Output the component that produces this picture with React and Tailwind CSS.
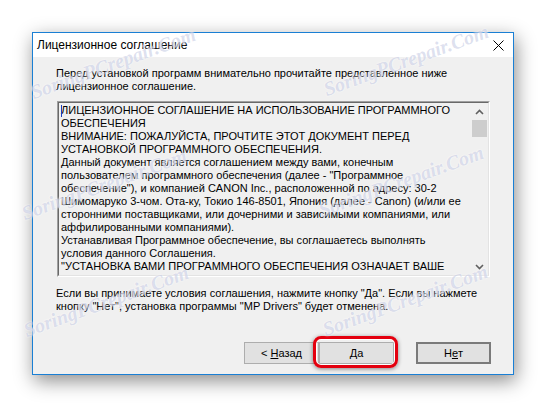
import React from "react";

const boxLines = [
  "ЛИЦЕНЗИОННОЕ СОГЛАШЕНИЕ НА ИСПОЛЬЗОВАНИЕ ПРОГРАММНОГО",
  "ОБЕСПЕЧЕНИЯ",
  "ВНИМАНИЕ: ПОЖАЛУЙСТА, ПРОЧТИТЕ ЭТОТ ДОКУМЕНТ ПЕРЕД",
  "УСТАНОВКОЙ ПРОГРАММНОГО ОБЕСПЕЧЕНИЯ.",
  "Данный документ является соглашением между вами, конечным",
  "пользователем программного обеспечения (далее - \"Программное",
  "обеспечение\"), и компанией CANON Inc., расположенной по адресу: 30-2",
  "Шимомаруко 3-чом. Ота-ку, Токио 146-8501, Япония (далее - Canon) (и/или ее",
  "сторонними поставщиками, или дочерними и зависимыми компаниями, или",
  "аффилированными компаниями).",
  "Устанавливая Программное обеспечение, вы соглашаетесь выполнять",
  "условия данного Соглашения.",
  "\"УСТАНОВКА ВАМИ ПРОГРАММНОГО ОБЕСПЕЧЕНИЯ ОЗНАЧАЕТ ВАШЕ",
];

const marks = [
  { left: 113, top: 63 },
  { left: 406, top: 60 },
  { left: 104, top: 184 },
  { left: 401, top: 181 },
  { left: 106, top: 301 },
  { left: 405, top: 300 },
];

function Watermark({ left, top }) {
  return (
    <div
      className="absolute pointer-events-none whitespace-nowrap italic font-bold text-[20px] leading-none text-[rgba(150,160,205,0.32)] [font-family:'Liberation_Serif',serif] -translate-x-1/2 -translate-y-1/2 -rotate-[20deg] [text-shadow:0_0_2px_rgba(255,255,255,0.9)]"
      style={{ left, top }}
    >
      SoringPCrepair.Com
    </div>
  );
}

function Chevron({ up }) {
  return (
    <svg width="9" height="6" viewBox="0 0 9 6">
      <path
        d={up ? "M1 5 L4.5 1.5 L8 5" : "M1 1 L4.5 4.5 L8 1"}
        fill="none"
        stroke="#606060"
        strokeWidth="1.6"
      />
    </svg>
  );
}

export default function App() {
  return (
    <div className="relative w-[546px] h-[408px] bg-white overflow-hidden pt-[32px] pl-[32px] [font-family:'Liberation_Sans',Arial,sans-serif] text-black">
      <div className="w-[482px] h-[343px] border border-[#1a7fd4] bg-[#f0f0f0] flex flex-col shadow-[2px_6px_18px_rgba(0,0,0,0.45)]">
        {/* Title bar */}
        <div className="h-[24px] bg-white flex items-center justify-between pl-[4px] pr-[9px] shrink-0">
          <span className="text-[12px] leading-none">Лицензионное соглашение</span>
          <svg width="11" height="11" viewBox="0 0 11 11">
            <path d="M0.5 0.5 L10.5 10.5 M10.5 0.5 L0.5 10.5" stroke="#000" strokeWidth="1" />
          </svg>
        </div>

        {/* Body */}
        <div className="flex flex-col pl-[23px] pr-[23px] pt-[10px] text-[11px] leading-[13px]">
          <div>
            <div className="whitespace-nowrap">Перед установкой программ внимательно прочитайте представленное ниже</div>
            <div className="whitespace-nowrap">лицензионное соглашение.</div>
          </div>

          {/* Text box */}
          <div className="mt-[8px] ml-px h-[176px] border-t border-l border-[#a0a0a0] border-r-white border-b-white border-r border-b">
            <div className="h-full border-t border-l border-[#696969] border-r border-b border-r-[#e3e3e3] border-b-[#e3e3e3] flex">
              <div className="flex-1 pl-[2px] pt-px overflow-hidden relative">
                <div className="absolute left-[2px] top-[2px] w-px h-[12px] bg-[#1d3fbf]" />
                {boxLines.map((l, i) => (
                  <div key={i} className="whitespace-nowrap">{l}</div>
                ))}
              </div>
              <div className="w-[17px] flex flex-col items-center bg-[#f0f0f0]">
                <div className="h-[17px] flex items-center justify-center"><Chevron up /></div>
                <div className="w-[15px] h-[17px] bg-[#cdcdcd]" />
                <div className="flex-1" />
                <div className="h-[17px] flex items-center justify-center"><Chevron /></div>
              </div>
            </div>
          </div>

          <div className="mt-[10px]">
            <div className="whitespace-nowrap">Если вы принимаете условия соглашения, нажмите кнопку "Да". Если вы нажмете</div>
            <div className="whitespace-nowrap">кнопку "Нет", установка программы "MP Drivers" будет отменена.</div>
          </div>

          {/* Buttons */}
          <div className="mt-[29px] flex justify-end -mr-px">
            <button className="w-[75px] h-[22px] bg-[#e1e1e1] border border-[#adadad] text-[11px] leading-none flex items-center justify-center">
              &lt; <span className="underline ml-[3px]">Н</span>азад
            </button>
            <div className="relative">
              <div className="absolute -left-[6px] -right-[4px] -top-[6px] -bottom-[4px] rounded-[8px] border-[3px] border-[#e4000f] shadow-[0_1px_4px_rgba(0,0,0,0.45),inset_0_0_0_1px_#fff]" />
              <button className="w-[75px] h-[22px] bg-[#e1e1e1] border border-[#adadad] text-[11px] leading-none flex items-center justify-center">
                <span className="underline">Д</span>а
              </button>
            </div>
            <button className="ml-[22px] w-[75px] h-[22px] bg-[#e1e1e1] border-2 border-[#7a7a7a] text-[11px] leading-none flex items-center justify-center">
              Н<span className="underline">е</span>т
            </button>
          </div>
        </div>
      </div>

      {marks.map((m, i) => (
        <Watermark key={i} {...m} />
      ))}
    </div>
  );
}
